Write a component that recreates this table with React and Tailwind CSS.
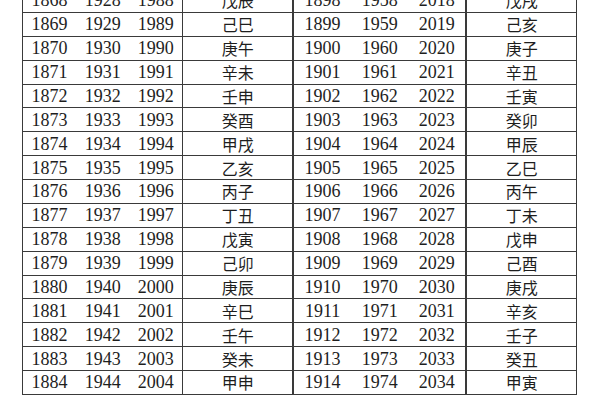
import React from 'react';

const STEMS = '甲乙丙丁戊己庚辛壬癸';
const BRANCHES = '子丑寅卯辰巳午未申酉戌亥';

const ganzhi = (year) => STEMS[(year - 4) % 10] + BRANCHES[(year - 4) % 12];

const ROWS = Array.from({ length: 17 }, (_, i) => 1868 + i);

function YearCells({ start, width }) {
  return (
    <div className={`flex ${width} border-b border-[#3a3a3a]`}>
      {[0, 60, 120].map((off) => (
        <div key={off} className="flex-1 flex items-center justify-center">
          {start + off}
        </div>
      ))}
    </div>
  );
}

export default function App() {
  return (
    <div className="w-[600px] h-[400px] overflow-hidden bg-white">
      <div
        className="mt-[-11px] ml-[22px] w-[555px] border-l border-r border-[#3a3a3a] text-[#1e1e1e] text-[18px] leading-none"
        style={{ fontFamily: '"Liberation Serif", "Noto Sans CJK SC", serif' }}
      >
        {ROWS.map((y) => (
          <div key={y} className="flex h-[23.875px]">
            <YearCells start={y} width="w-[160px]" />
            <div className="w-[110px] flex items-center justify-center border-l border-b border-[#3a3a3a] text-[16px] font-['Noto_Sans_CJK_SC',sans-serif]">
              {ganzhi(y)}
            </div>
            <div className="border-l-2 border-[#3a3a3a]" />
            <YearCells start={y + 30} width="w-[172px]" />
            <div className="w-[111px] flex items-center justify-center border-l-2 border-b border-[#3a3a3a] text-[16px] font-['Noto_Sans_CJK_SC',sans-serif]">
              {ganzhi(y + 30)}
            </div>
          </div>
        ))}
      </div>
    </div>
  );
}
